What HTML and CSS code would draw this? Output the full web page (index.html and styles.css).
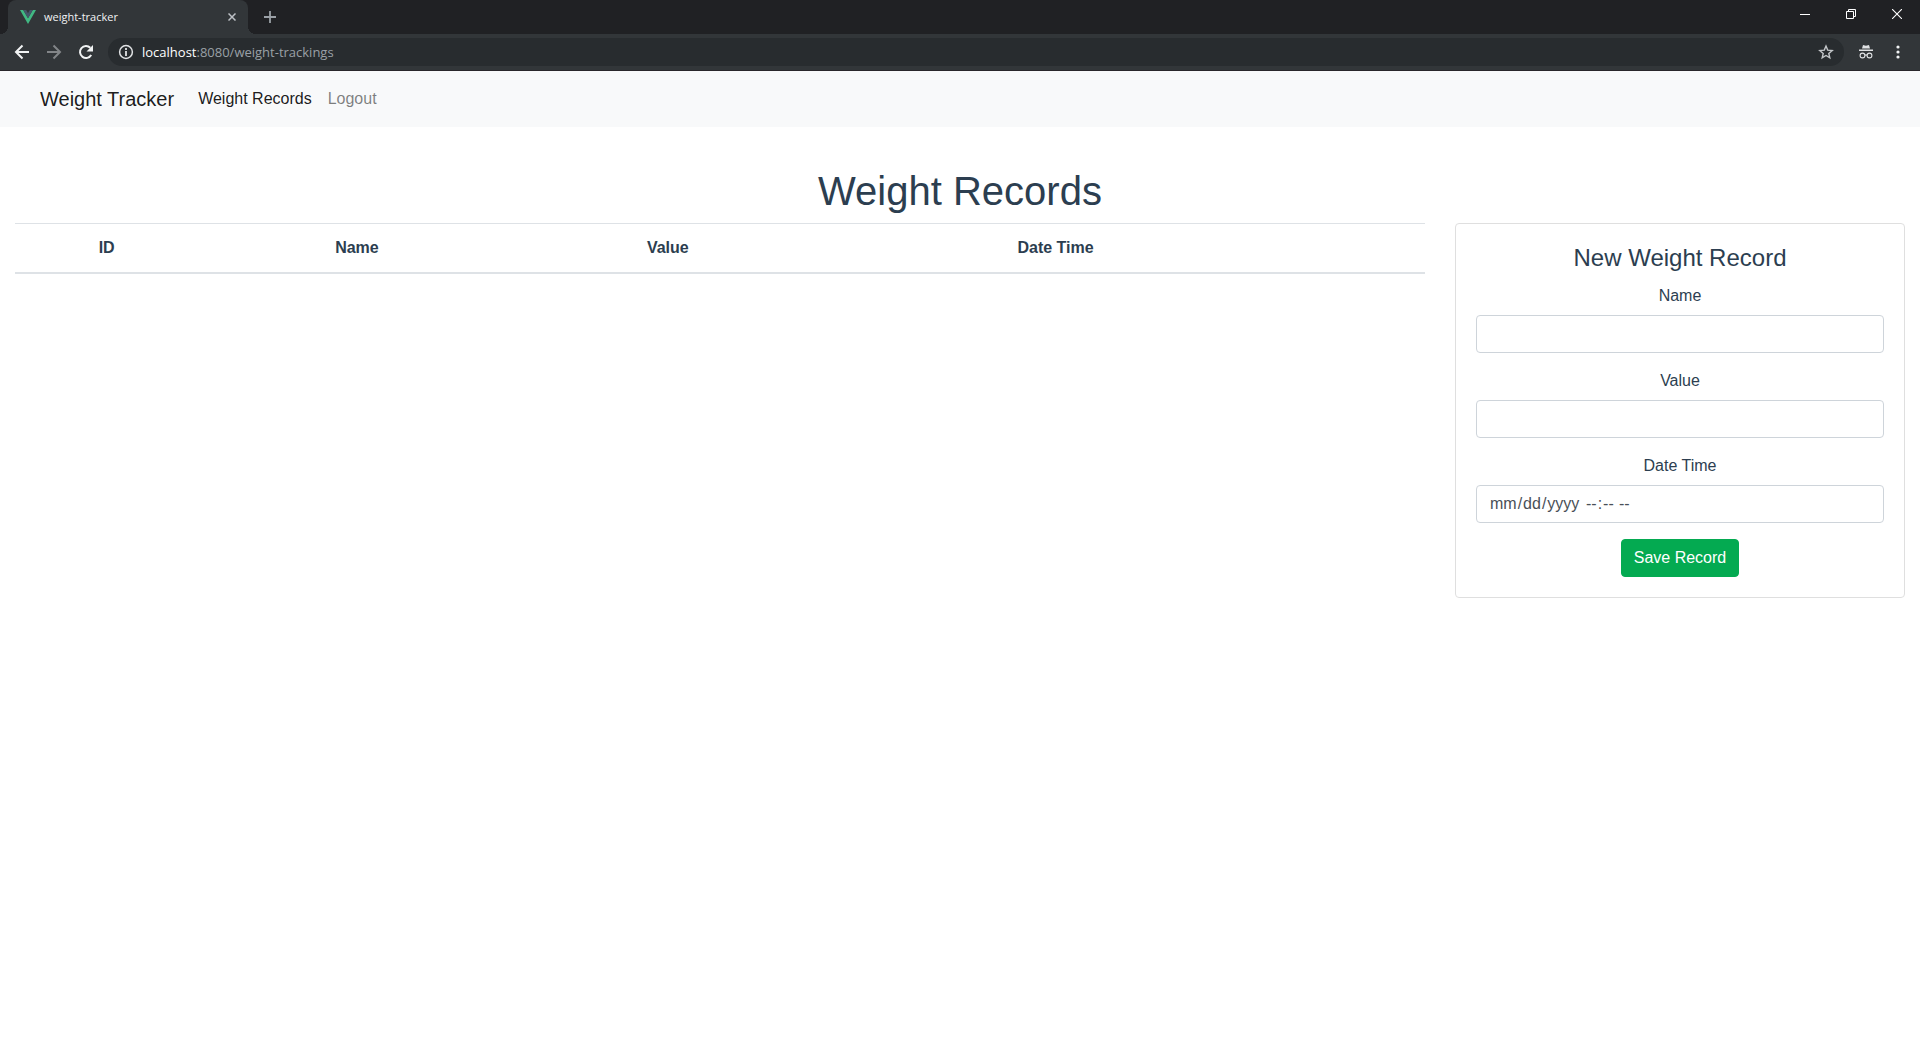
FILE: index.html
```html
<!DOCTYPE html>
<html lang="en">
<head>
<meta charset="utf-8">
<title>weight-tracker</title>
<link rel="stylesheet" href="styles.css">
</head>
<body>
<header class="browser">
  <div class="tab-strip">
    <div class="tab">
      <svg class="favicon" width="16" height="16" viewBox="0 0 16 16" aria-hidden="true"><path d="M0 1h3.200L8 9.300 12.800 1H16L8 15z" fill="#41b883"/><path d="M3.200 1h3L8 4.200 9.800 1h3L8 9.300z" fill="#45566b"/></svg>
      <span class="tab-title">weight-tracker</span>
      <button class="icon-button tab-close" aria-label="Close tab"><svg width="8" height="8" viewBox="0 0 8 8"><path d="M.5.5l7 7M7.500.5l-7 7" stroke="#bdc1c6" stroke-width="1.500"/></svg></button>
    </div>
    <button class="icon-button new-tab" aria-label="New tab"><svg width="12" height="12" viewBox="0 0 12 12"><path d="M6 0v12M0 6h12" stroke="#9aa0a6" stroke-width="1.800"/></svg></button>
    <div class="window-buttons">
      <button class="icon-button" aria-label="Minimize"><svg width="10" height="10" viewBox="0 0 10 10"><path d="M0 5.500h10" stroke="#fff"/></svg></button>
      <button class="icon-button" aria-label="Restore"><svg width="10" height="10" viewBox="0 0 10 10" fill="none" stroke="#fff"><path d="M.5 2.500h7v7h-7zM2.500 2.500v-2h7v7h-2"/></svg></button>
      <button class="icon-button" aria-label="Close"><svg width="10" height="10" viewBox="0 0 10 10"><path d="M0 0l10 10M10 0L0 10" stroke="#fff" stroke-width="1.100"/></svg></button>
    </div>
  </div>
  <div class="toolbar">
    <button class="icon-button" aria-label="Back"><svg width="16" height="16" viewBox="0 0 16 16" fill="none" stroke="#f1f3f4" stroke-width="2"><path d="M15 8H2M8.500 1.500L2 8l6.500 6.500"/></svg></button>
    <button class="icon-button" aria-label="Forward"><svg width="16" height="16" viewBox="0 0 16 16" fill="none" stroke="#828588" stroke-width="2"><path d="M1 8h13M7.500 1.500L14 8l-6.500 6.500"/></svg></button>
    <button class="icon-button" aria-label="Reload"><svg width="16" height="16" viewBox="0 0 16 16"><path d="M13.200 11A6 6 0 1 1 12.300 3.800" fill="none" stroke="#f1f3f4" stroke-width="2"/><path d="M15 1v6.500H8.500z" fill="#f1f3f4"/></svg></button>
    <div class="address-bar">
      <svg width="16" height="16" viewBox="0 0 16 16" aria-hidden="true"><circle cx="8" cy="8" r="6.400" fill="none" stroke="#e0e2e4" stroke-width="1.500"/><path d="M8 7v5M8 4v2" stroke="#e0e2e4" stroke-width="1.800"/></svg>
      <div class="url" role="textbox" aria-label="Address"><span class="host">localhost</span>:8080/weight-trackings</div>
      <button class="icon-button" aria-label="Bookmark"><svg width="16" height="16" viewBox="0 0 16 16"><path d="M8 2l1.700 4.100 4.500.4-3.400 2.900 1 4.400L8 11.500l-3.800 2.300 1-4.400L1.800 6.500l4.500-.4z" fill="none" stroke="#c4c7ca" stroke-width="1.400"/></svg></button>
    </div>
    <button class="icon-button" aria-label="Incognito"><svg width="16" height="16" viewBox="0 0 16 16"><path d="M4 4.600L5 1l3 .7L11 1l1 3.600zM1 5.600h14V7H1z" fill="#dfe1e3"/><g fill="none" stroke="#dfe1e3" stroke-width="1.100"><circle cx="4.500" cy="11.500" r="2.400"/><circle cx="11.500" cy="11.500" r="2.400"/><path d="M6.900 11.200q1.100-.7 2.200 0"/></g></svg></button>
    <button class="icon-button" aria-label="Menu"><svg width="16" height="16" viewBox="0 0 16 16" fill="#f1f3f4"><circle cx="8" cy="3" r="1.600"/><circle cx="8" cy="8" r="1.600"/><circle cx="8" cy="13" r="1.600"/></svg></button>
  </div>
</header>
<nav class="navbar">
  <a class="brand" href="#">Weight Tracker</a>
  <a class="nav-link active" href="#">Weight Records</a>
  <a class="nav-link" href="#">Logout</a>
</nav>
<main class="content">
  <h1>Weight Records</h1>
  <div class="row">
    <section class="records">
      <table>
        <thead>
          <tr><th class="id">ID</th><th class="name">Name</th><th class="value">Value</th><th class="date">Date Time</th><th></th></tr>
        </thead>
        <tbody></tbody>
      </table>
    </section>
    <aside class="side">
      <form class="card">
        <h4>New Weight Record</h4>
        <label for="name">Name</label>
        <input class="field" id="name" type="text">
        <label for="value">Value</label>
        <input class="field" id="value" type="text">
        <label for="date">Date Time</label>
        <div class="field date-time">
          <input class="date-part" id="date" type="date">
          <input type="time" aria-label="Time">
        </div>
        <button class="save" type="button">Save Record</button>
      </form>
    </aside>
  </div>
</main>
</body>
</html>
```
FILE: styles.css
```css
* { box-sizing: border-box; }
body {
  margin: 0;
  background: #fff;
  color: #2c3e50;
  font: 16px/24px "Liberation Sans", Arial, sans-serif;
}
button, input { font: inherit; }
a { text-decoration: none; }
svg { display: block; }

/* Browser window */
.browser {
  background: #323639;
  border-bottom: 1px solid #29262b;
  font-family: "Open Sans", sans-serif;
}
.tab-strip {
  display: flex;
  height: 34px;
  padding-left: 8px;
  background: #202124;
}
.tab {
  position: relative;
  display: flex;
  align-items: center;
  width: 240px;
  padding: 0 12px;
  background: #323639;
  border-radius: 8px 8px 0 0;
  color: #f1f3f4;
  font-size: 11px;
}
.tab::before, .tab::after {
  content: "";
  position: absolute;
  bottom: 0;
  width: 8px;
  height: 8px;
}
.tab::before {
  left: -8px;
  background: radial-gradient(circle at 0 0, #202124 8px, #323639 8px);
}
.tab::after {
  right: -8px;
  background: radial-gradient(circle at 100% 0, #202124 8px, #323639 8px);
}
.tab-title { flex: 1; margin-left: 8px; }
.icon-button {
  display: flex;
  align-items: center;
  justify-content: center;
  padding: 0;
  border: 0;
  background: none;
}
.tab-close { width: 8px; }
.new-tab { width: 28px; margin-left: 8px; }
.window-buttons { display: flex; margin-left: auto; }
.window-buttons .icon-button { width: 46px; height: 28px; }
.toolbar {
  display: flex;
  align-items: center;
  height: 36px;
  gap: 16px;
  padding: 0 14px;
}
.address-bar {
  display: flex;
  flex: 1;
  align-items: center;
  height: 28px;
  margin: 0 -2px;
  padding: 0 10px;
  border-radius: 14px;
  background: #282c2f;
}
.url { flex: 1; margin-left: 8px; color: #9aa0a6; font-size: 13px; }
.host { color: #fff; }

/* Application */
.navbar {
  display: flex;
  align-items: center;
  height: 56px;
  padding: 0 40px;
  background: #f8f9fa;
}
.brand { margin-right: 16px; color: rgba(0, 0, 0, .9); font-size: 20px; }
.nav-link { padding: 8px; color: rgba(0, 0, 0, .5); }
.nav-link.active { color: rgba(0, 0, 0, .9); }
.content { padding-top: 40px; text-align: center; }
h1 { margin: 0 0 8px; font-size: 40px; font-weight: 500; line-height: 48px; }
.row { display: flex; align-items: flex-start; }
.records { width: 75%; padding: 0 15px; }
.side { width: 25%; padding: 0 15px; }
table { width: 100%; border-collapse: separate; border-spacing: 0; table-layout: fixed; }
th {
  height: 51px;
  padding: 12px;
  border-top: 1px solid #dee2e6;
  border-bottom: 2px solid #dee2e6;
  line-height: 24px;
  vertical-align: top;
}
.id { width: 13%; }
.name { width: 22.5%; }
.value { width: 21.6%; }
.date { width: 33.4%; }
.card { padding: 20px; border: 1px solid #dfdfdf; border-radius: 4px; }
h4 { margin: 0 0 12px; font-size: 24px; font-weight: 500; line-height: 28px; }
label { display: block; margin-bottom: 7px; }
.field {
  display: block;
  width: 100%;
  height: 38px;
  margin-bottom: 16px;
  padding: 6px 12px;
  border: 1px solid #ced4da;
  border-radius: 4px;
  background: #fff;
  color: #495057;
}
.date-time { display: flex; align-items: center; gap: 4px; }
.date-time input {
  height: 24px;
  padding: 0;
  border: 0;
  background: none;
  color: inherit;
}
.date-time .date-part { width: 92px; }
input::-webkit-calendar-picker-indicator { display: none; }
.save {
  height: 38px;
  padding: 6px 12px;
  border: 1px solid #04aa51;
  border-radius: 4px;
  background: #04aa51;
  color: #fff;
}
```
